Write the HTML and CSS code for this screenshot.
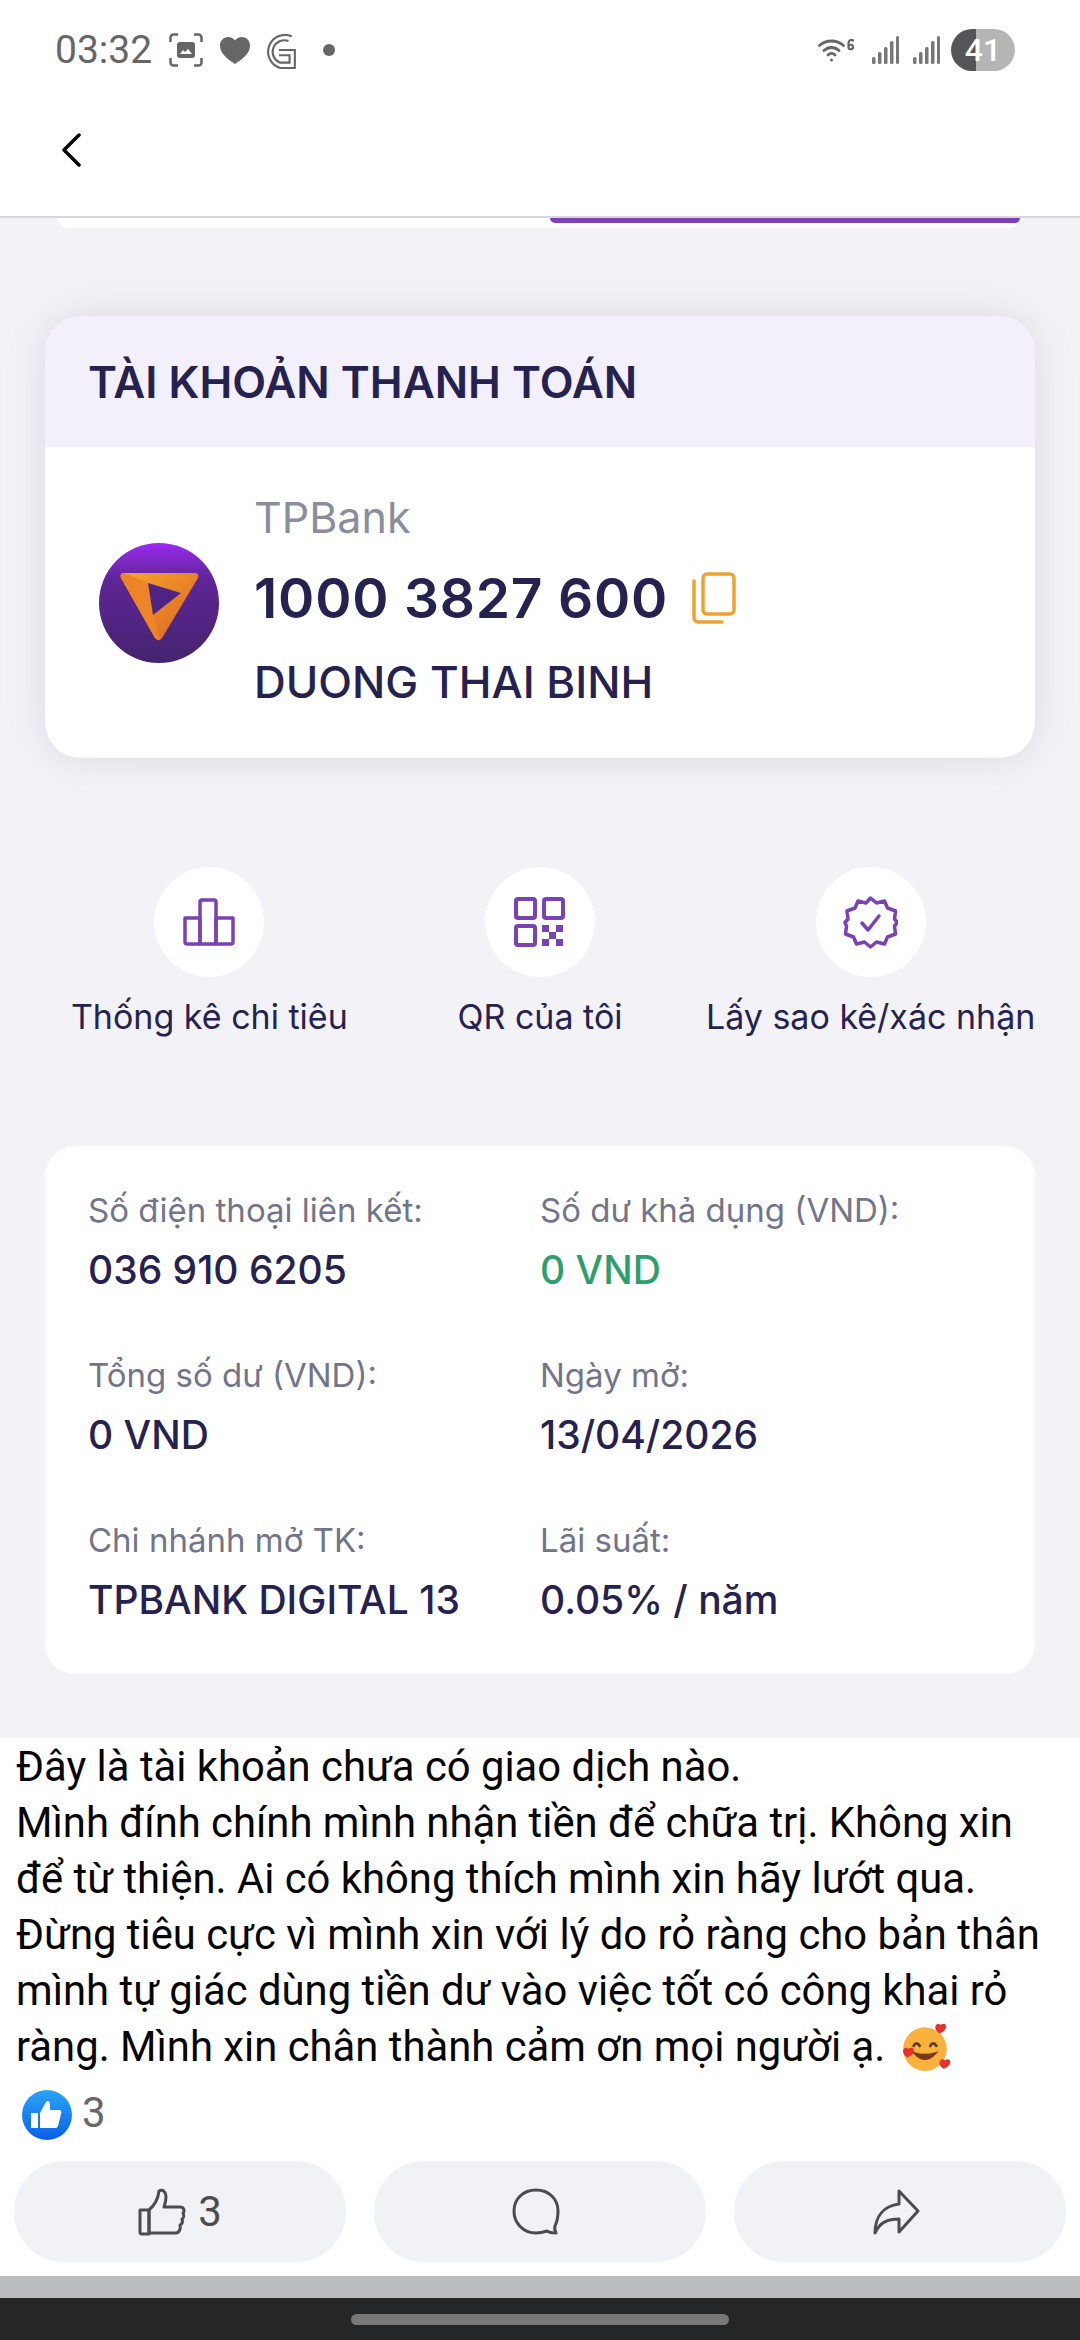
FILE: index.html
```html
<!DOCTYPE html>
<html lang="vi">
<head>
  <meta charset="UTF-8">
  <meta name="viewport" content="width=device-width, initial-scale=1.0">
  <title>TPBank</title>
  <link rel="stylesheet" href="styles.css">
</head>
<body>
  <div class="status-bar">
    <div class="status-left">
      <span class="time">03:32</span>
      <svg class="st-shot" viewBox="0 0 34 34"><path d="M1.500 9V4.500a3 3 0 0 1 3-3H9M25 1.500h4.500a3 3 0 0 1 3 3V9M32.500 25v4.500a3 3 0 0 1-3 3H25M9 32.500H4.500a3 3 0 0 1-3-3V25" fill="none" stroke="#666" stroke-width="2.500"/><rect x="8" y="9" width="18" height="16" rx="3" fill="#666"/><path d="M11 21l3-4 2 2 3-3 4 5z" fill="#fff"/></svg>
      <svg class="st-heart" viewBox="0 0 30 27"><path d="M15 27C6 21 0 16 0 8.500 0 3.500 3.800 0 8 0c3 0 5.500 1.300 7 3.500C16.500 1.300 19 0 22 0c4.200 0 8 3.500 8 8.500C30 16 24 21 15 27z" fill="#666"/></svg>
      <svg class="st-g" viewBox="0 0 32 36" fill="none" stroke="#666" stroke-width="2"><path d="M28 5A16 16 0 1 0 17 35h14V18H16"/><path d="M25 9.500A11 11 0 1 0 17 30h9v-7h-10"/></svg>
      <span class="st-dot"></span>
    </div>
    <div class="status-right">
      <svg class="st-wifi" viewBox="0 0 37 26" fill="none" stroke="#666" stroke-width="2.800" stroke-linecap="round"><path d="M1.500 8.500c7-6 17-6 24 0"/><path d="M6 13.500c4.500-4 10.500-4 15 0"/><path d="M10 18c2-2 5-2 7 0"/><circle cx="13.500" cy="23" r="1.500" fill="#666" stroke="none"/><path d="M35 3.500c-2-1.500-4.500-.5-4.500 3v3.500c0 3 4.500 3 4.500 0s-4.500-3-4.500 0" stroke-width="2.200"/></svg>
      <svg class="st-signal" viewBox="0 0 27 28"><g fill="#777"><rect x="0" y="21" width="3.500" height="7" rx="1.500"/><rect x="6" y="16" width="3.500" height="12" rx="1.500"/><rect x="12" y="11" width="3.500" height="17" rx="1.500"/><rect x="18" y="5" width="3.500" height="23" rx="1.500"/><rect x="24" y="0" width="3" height="28" rx="1.500"/></g></svg>
      <svg class="st-signal" viewBox="0 0 27 28"><g fill="#777"><rect x="0" y="21" width="3.500" height="7" rx="1.500"/><rect x="6" y="16" width="3.500" height="12" rx="1.500"/><rect x="12" y="11" width="3.500" height="17" rx="1.500"/><rect x="18" y="5" width="3.500" height="23" rx="1.500"/><rect x="24" y="0" width="3" height="28" rx="1.500"/></g></svg>
      <span class="battery">41</span>
    </div>
  </div>

  <div class="nav-bar">
    <svg class="back" viewBox="0 0 20 34"><path d="M18 2L3 17l15 15" fill="none" stroke="#000" stroke-width="3.500" stroke-linecap="round" stroke-linejoin="round"/></svg>
  </div>

  <div class="app-area">
    <div class="stub"><div class="stub-btn"></div></div>

    <section class="account-card">
      <h2 class="account-title">TÀI KHOẢN THANH TOÁN</h2>
      <div class="account-body">
        <svg class="bank-logo" viewBox="0 0 120 120">
          <defs>
            <linearGradient id="logoBg" x1="0" y1="0" x2="0" y2="1">
              <stop offset="0" stop-color="#9a2bf0"/>
              <stop offset="0.3" stop-color="#5f2596"/>
              <stop offset="1" stop-color="#44246f"/>
            </linearGradient>
            <linearGradient id="logoA" x1="0" y1="0" x2="1" y2="1">
              <stop offset="0" stop-color="#f9a532"/>
              <stop offset="1" stop-color="#d9621f"/>
            </linearGradient>
          </defs>
          <circle cx="60" cy="60" r="60" fill="url(#logoBg)"/>
          <path d="M25 30h71c3 0 4 3 3 5L63 95c-2 3-5 3-7 0L22 35c-1-3 0-5 3-5z" fill="url(#logoA)"/>
          <path d="M25 30l24 10 5 32 7 25-5-2L22 35c-1-3 0-5 3-5z" fill="#ee8428"/>
          <path d="M49 40l33 10-28 22z" fill="#4d2383"/>
        </svg>
        <div class="account-info">
          <div class="bank-name">TPBank</div>
          <div class="account-number">
            <span>1000 3827 600</span>
            <svg class="copy-icon" viewBox="0 0 44 52" fill="none" stroke="#eea32f" stroke-width="3.500"><rect x="11" y="2" width="31" height="40" rx="4"/><path d="M2 9v37a4 4 0 0 0 4 4h24" stroke-linecap="round"/></svg>
          </div>
          <div class="account-owner">DUONG THAI BINH</div>
        </div>
      </div>
    </section>

    <div class="actions">
      <div class="action">
        <span class="action-circle">
          <svg class="icon-chart" viewBox="0 0 52 48" fill="none" stroke="#7a42b5" stroke-width="3.500" stroke-linejoin="round"><path d="M2 20h15v26H4a2 2 0 0 1-2-2z"/><path d="M17 4a2 2 0 0 1 2-2h12a2 2 0 0 1 2 2v42H17z"/><path d="M33 20h17v24a2 2 0 0 1-2 2H33z"/></svg>
        </span>
        <span class="action-label">Thống kê chi tiêu</span>
      </div>
      <div class="action">
        <span class="action-circle">
          <svg class="icon-qr" viewBox="0 0 51 50"><g fill="none" stroke="#7a42b5" stroke-width="4"><rect x="2" y="2" width="19" height="19" rx="2"/><rect x="30" y="2" width="19" height="19" rx="2"/><rect x="2" y="29" width="19" height="19" rx="2"/></g><g fill="#7a42b5"><rect x="28" y="28" width="7" height="7"/><rect x="42" y="28" width="7" height="7"/><rect x="35" y="35" width="7" height="7"/><rect x="28" y="42" width="7" height="7"/><rect x="42" y="42" width="7" height="7"/></g></svg>
        </span>
        <span class="action-label">QR của tôi</span>
      </div>
      <div class="action">
        <span class="action-circle">
          <svg class="icon-badge" viewBox="0 0 55 53" fill="none" stroke="#7a42b5" stroke-width="3.500" stroke-linejoin="round"><path d="M27.500 2l6 5 8-2 3 7 8 3-1 8 3 3.500-3 3.500 1 8-8 3-3 7-8-2-6 5-6-5-8 2-3-7-8-3 1-8L2 26.500 5 23l-1-8 8-3 3-7 8 2z"/><path d="M19 27l6 7 11-14" stroke-linecap="round"/></svg>
        </span>
        <span class="action-label">Lấy sao kê/xác nhận</span>
      </div>
    </div>

    <section class="info-card">
      <div class="info-item">
        <div class="info-label">Số điện thoại liên kết:</div>
        <div class="info-value">036 910 6205</div>
      </div>
      <div class="info-item">
        <div class="info-label">Số dư khả dụng (VND):</div>
        <div class="info-value green">0 VND</div>
      </div>
      <div class="info-item">
        <div class="info-label">Tổng số dư (VND):</div>
        <div class="info-value">0 VND</div>
      </div>
      <div class="info-item">
        <div class="info-label">Ngày mở:</div>
        <div class="info-value">13/04/2026</div>
      </div>
      <div class="info-item">
        <div class="info-label">Chi nhánh mở TK:</div>
        <div class="info-value">TPBANK DIGITAL 13</div>
      </div>
      <div class="info-item">
        <div class="info-label">Lãi suất:</div>
        <div class="info-value">0.05% / năm</div>
      </div>
    </section>
  </div>

  <div class="post">
    <p class="post-text">Đây là tài khoản chưa có giao dịch nào.<br>Mình đính chính mình nhận tiền để chữa trị. Không xin<br>để từ thiện. Ai có không thích mình xin hãy lướt qua.<br>Đừng tiêu cực vì mình xin với lý do rỏ ràng cho bản thân<br>mình tự giác dùng tiền dư vào việc tốt có công khai rỏ<br>ràng. Mình xin chân thành cảm ơn mọi người ạ.
      <svg class="emoji" viewBox="0 0 50 50">
        <circle cx="24" cy="27" r="21" fill="#fbb13c"/>
        <path d="M13 24q3-5 6 0M29 24q3-5 6 0" fill="none" stroke="#5b3a1a" stroke-width="2.500" stroke-linecap="round"/>
        <path d="M14 31q10 11 20 0q-10 3-20 0z" fill="#7a3a1a" stroke="#7a3a1a" stroke-width="2"/>
        <path d="M38 12c-5-3-5-8-2-9 2-1 3 1 3 1s2-2 4-1c3 2 1 7-5 9zM7 35c-5-3-5-8-2-9 2-1 3 1 3 1s2-2 4-1c3 2 1 7-5 9zM42 46c-5-3-5-8-2-9 2-1 3 1 3 1s2-2 4-1c3 2 1 7-5 9z" fill="#e5322d"/>
      </svg>
    </p>
    <div class="reactions">
      <svg class="like-badge" viewBox="0 0 50 50">
        <defs>
          <linearGradient id="likeBg" x1="0" y1="0" x2="0" y2="1">
            <stop offset="0" stop-color="#2aa4f8"/>
            <stop offset="1" stop-color="#0a60e8"/>
          </linearGradient>
        </defs>
        <circle cx="25" cy="25" r="25" fill="url(#likeBg)"/>
        <path d="M9 23h7v15H9z" fill="#fff"/>
        <path d="M18 23l6-11c1-2 4-1 4 2v6h9c2 0 3 2 2 4l-3 12c-1 2-2 2-3 2H18z" fill="#fff"/>
      </svg>
      <span class="like-count">3</span>
    </div>
    <div class="post-buttons">
      <div class="post-btn">
        <svg class="btn-like" viewBox="0 0 48 48" fill="none" stroke="#4b4c4f" stroke-width="3" stroke-linejoin="round"><path d="M2 22h9v24H4a2 2 0 0 1-2-2z"/><path d="M11 22c6-5 9-10 10-19 4-2 7 1 7 6 0 4-1 7-2 10h16c4 0 5 4 3 6 1 2 1 5-1 6 1 3 0 5-2 6 1 4-1 8-4 8H11z"/></svg>
        <span class="btn-count">3</span>
      </div>
      <div class="post-btn shifted">
        <svg class="btn-comment" viewBox="0 0 48 48" fill="none" stroke="#4b4c4f" stroke-width="3" stroke-linejoin="round"><path d="M24 2C11 2 2 11 2 23s9 22 22 22c4 0 8-1 11-2 3 2 6 2 9 2-1-2-2-4-1-7 2-4 3-9 3-15C46 11 37 2 24 2z"/></svg>
      </div>
      <div class="post-btn shifted">
        <svg class="btn-share" viewBox="0 0 48 48" fill="none" stroke="#4b4c4f" stroke-width="3" stroke-linejoin="round"><path d="M27 3l19 20-19 21V31c-11 0-19 3-24 14 0-17 9-27 24-29z"/></svg>
      </div>
    </div>
  </div>

  <div class="gray-strip"></div>
  <div class="system-nav"><span class="home-handle"></span></div>
</body>
</html>
```

FILE: styles.css
```css
body {
  margin: 0;
  width: 1080px;
  height: 2340px;
  display: flex;
  flex-direction: column;
  overflow: hidden;
  background-color: #fff;
  font-family: Inter, 'Noto Sans', sans-serif;
  color: #262250;
}

/* status bar */
.status-bar {
  height: 100px;
  display: flex;
  justify-content: space-between;
  align-items: center;
  padding: 0 65px 0 55px;
  box-sizing: border-box;
}

.status-left, .status-right {
  display: flex;
  align-items: center;
}

.time {
  font-family: Roboto, sans-serif;
  font-size: 39px;
  color: #666;
  margin-right: 17px;
}

.st-shot { width: 34px; height: 34px; margin-right: 17px; }
.st-heart { width: 30px; height: 27px; margin-right: 12px; }
.st-g { width: 34px; height: 38px; margin-right: 27px; }

.st-dot {
  width: 12px;
  height: 12px;
  border-radius: 50%;
  background-color: #666;
}

.st-wifi { width: 37px; height: 26px; margin-right: 17px; }
.st-signal { width: 27px; height: 28px; margin-right: 14px; }

.battery {
  width: 64px;
  height: 42px;
  border-radius: 21px;
  margin-left: -3px;
  display: flex;
  align-items: center;
  justify-content: center;
  background: linear-gradient(to right, #555 0, #555 25px, #b5b5b5 25px);
  color: #fff;
  font-family: Roboto, sans-serif;
  font-weight: 500;
  font-size: 32px;
}

/* top nav */
.nav-bar {
  height: 118px;
  box-sizing: border-box;
  padding: 33px 0 0 61px;
  border-bottom: 2px solid #d8d8d8;
}

.back {
  display: block;
  width: 20px;
  height: 34px;
}

/* app content */
.app-area {
  height: 1520px;
  background-color: #f2f2f7;
}

.stub {
  margin: 0 60px 0 58px;
  height: 10px;
  background-color: #fff;
  border-radius: 0 0 14px 14px;
  display: flex;
  justify-content: flex-end;
}

.stub-btn {
  width: 470px;
  height: 5px;
  background-color: #7d3fb8;
  border-radius: 0 0 10px 10px;
}

.account-card {
  margin: 88px 45px 0;
  height: 442px;
  background-color: #fff;
  border-radius: 36px;
  overflow: hidden;
  box-shadow: 0 0 44px rgba(30, 20, 60, 0.1);
}

.account-title {
  margin: 0;
  height: 131px;
  box-sizing: border-box;
  padding: 42px 0 0 43px;
  background-color: #f3f0fc;
  font-size: 44px;
  line-height: 48px;
  font-weight: 600;
}

.account-body {
  display: flex;
  align-items: center;
  padding: 44px 0 0 54px;
}

.bank-logo {
  width: 120px;
  height: 120px;
  margin-right: 35px;
  margin-top: 6px;
}

.account-info {
  display: flex;
  flex-direction: column;
}

.bank-name {
  font-size: 43px;
  line-height: 52px;
  color: #8a8d9c;
}

.account-number {
  display: flex;
  align-items: center;
  margin-top: 25px;
  font-size: 55px;
  line-height: 60px;
  font-weight: 600;
  letter-spacing: 0.800px;
}

.copy-icon {
  width: 44px;
  height: 52px;
  margin-left: 24px;
}

.account-owner {
  margin-top: 28px;
  font-size: 44px;
  line-height: 52px;
  font-weight: 500;
}

/* action shortcuts */
.actions {
  display: grid;
  grid-template-columns: repeat(3, 1fr);
  margin: 109px 44px 0;
}

.action {
  display: flex;
  flex-direction: column;
  align-items: center;
  gap: 20px;
}

.action-circle {
  width: 110px;
  height: 110px;
  border-radius: 50%;
  background-color: #fff;
  display: flex;
  align-items: center;
  justify-content: center;
}

.action-label {
  font-size: 34px;
  line-height: 40px;
  white-space: nowrap;
}

.icon-chart { width: 52px; height: 48px; }
.icon-qr { width: 51px; height: 50px; }
.icon-badge { width: 55px; height: 53px; }

/* account details */
.info-card {
  margin: 109px 45px 0;
  padding: 44px 0 52px 43px;
  background-color: #fff;
  border-radius: 30px;
  display: grid;
  grid-template-columns: 452px 1fr;
  row-gap: 63px;
}

.info-label {
  font-size: 33px;
  line-height: 40px;
  color: #72758a;
}

.info-value {
  margin-top: 18px;
  font-size: 39px;
  line-height: 44px;
  font-weight: 500;
}

.info-value.green {
  color: #2f9e6e;
}

/* facebook post part */
.post {
  height: 538px;
  box-sizing: border-box;
  padding-top: 1px;
  background-color: #fff;
  color: #050505;
  font-family: Roboto, sans-serif;
}

.post-text {
  margin: 0;
  padding-left: 16px;
  font-size: 41.800px;
  line-height: 56px;
  white-space: nowrap;
}

.emoji {
  width: 52px;
  height: 52px;
  vertical-align: -12px;
  margin-left: 4px;
}

.reactions {
  display: flex;
  align-items: center;
  gap: 10px;
  margin: 15px 0 0 22px;
}

.like-badge {
  width: 50px;
  height: 50px;
}

.like-count {
  font-size: 42px;
  line-height: 44px;
  margin-bottom: 4px;
  color: #65676b;
}

.post-buttons {
  display: grid;
  grid-template-columns: repeat(3, 332px);
  gap: 28px;
  margin: 21px 14px 0;
}

.post-btn {
  height: 101px;
  border-radius: 50px;
  background-color: #f0f2f5;
  display: flex;
  align-items: center;
  justify-content: center;
  gap: 12px;
}

.post-btn.shifted {
  padding-right: 8px;
}

.btn-like, .btn-comment, .btn-share {
  width: 48px;
  height: 48px;
}

.btn-count {
  font-size: 42px;
  color: #4b4c4f;
}

.gray-strip {
  height: 22px;
  background-color: #babcc0;
}

.system-nav {
  flex: 1;
  background-color: #252628;
  display: flex;
  justify-content: center;
  padding-top: 16px;
}

.home-handle {
  width: 378px;
  height: 11px;
  border-radius: 6px;
  background-color: #787878;
}
```
